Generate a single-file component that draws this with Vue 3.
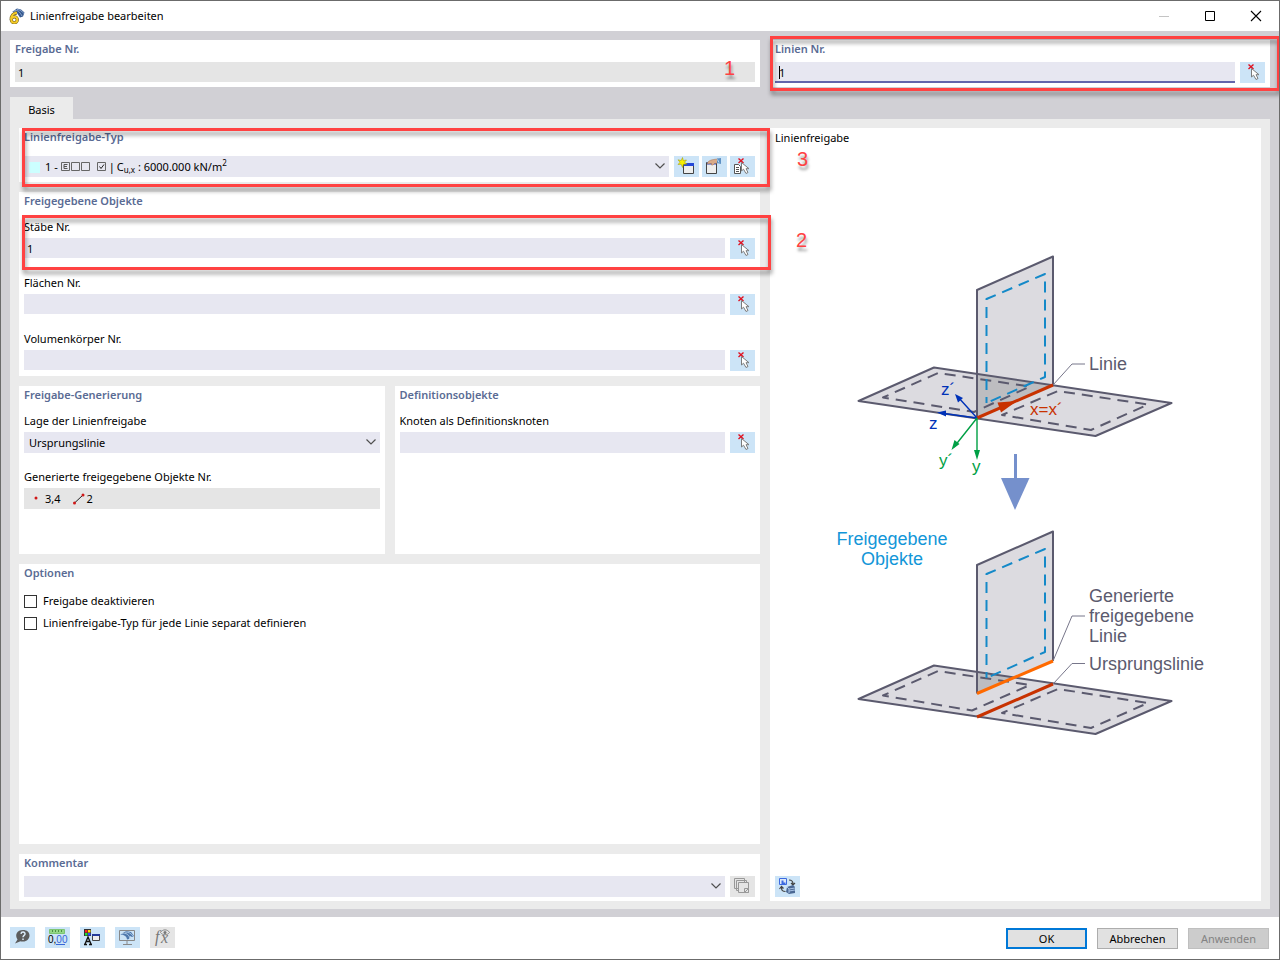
<script setup>
import { ref, h } from 'vue'

const releaseNo = ref('1')
const lineNo = ref('1')
const members = ref('1')
const surfaces = ref('')
const solids = ref('')
const nodes = ref('')
const deactivate = ref(false)
const separate = ref(false)

const PickIcon = (props) =>
  h('svg', { viewBox: '0 0 25 21', width: 25, height: 21, 'aria-hidden': 'true' }, [
    props.list
      ? h('path', { d: 'M4.5 8.5h4l2 2v7h-6zM6 11.5h3M6 13.5h3M6 15.5h3', fill: '#fff', stroke: '#555' })
      : null,
    h('path', { d: 'M8.5 2.5l5 4.5M13.5 2.5l-5 4.5', stroke: '#e01020', 'stroke-width': 1.4, fill: 'none' }),
    h('path', {
      d: 'M11.5 6.5v8.5l2-1.8 2.5 4.3 2-1-2-3.8h3z',
      fill: '#fff',
      stroke: '#7c7c7c',
      'stroke-linejoin': 'round',
    }),
  ])
PickIcon.props = ['list']

const Chevron = () =>
  h('svg', { class: 'chevron', viewBox: '0 0 10 6', width: 10, height: 6, 'aria-hidden': 'true' }, [
    h('path', { d: 'M0.5 0.5L5 5l4.5-4.5', fill: 'none', stroke: '#505050', 'stroke-width': 1.2 }),
  ])
</script>

<template>
  <div class="window">
    <header class="titlebar">
      <svg class="logo" viewBox="0 0 16 16" width="16" height="16" aria-hidden="true">
        <path d="M3 4l5-3.500 4 1 3.500 3-1.500 4-3 1-4-6z" fill="#35598f" />
        <path d="M5 3c3-2 6 1 8 5M8 1.500c3 0 5 2 7 4" fill="none" stroke="#8ba6d0" />
        <path d="M8 4.800C4 5 2 8 2.300 11.500" fill="none" stroke="#6a5a20" stroke-width="3.200" />
        <circle cx="5.300" cy="11.800" r="3" fill="none" stroke="#6a5a20" stroke-width="3.200" />
        <path d="M8 4.800C4 5 2 8 2.300 11.500" fill="none" stroke="#f5cb27" stroke-width="2" />
        <circle cx="5.300" cy="11.800" r="3" fill="none" stroke="#f5cb27" stroke-width="2" />
      </svg>
      <h1>Linienfreigabe bearbeiten</h1>
      <div class="controls">
        <button type="button" aria-label="Minimieren"><svg viewBox="0 0 12 12" width="12" height="12"><path d="M1 6.500h10" stroke="#c4c4c4" /></svg></button>
        <button type="button" aria-label="Maximieren"><svg viewBox="0 0 12 12" width="12" height="12"><path d="M1.500 1.500h9v9h-9z" fill="none" stroke="#000" /></svg></button>
        <button type="button" aria-label="Schließen"><svg viewBox="0 0 12 12" width="12" height="12"><path d="M1 1l10 10M11 1L1 11" stroke="#000" stroke-width="1.100" /></svg></button>
      </div>
    </header>

    <main class="body">
      <div class="top">
        <section class="panel compact">
          <h2><label for="release-no">Freigabe Nr.</label></h2>
          <input id="release-no" v-model="releaseNo" class="field readonly" readonly />
          <span class="mark mark-one">1</span>
        </section>
        <section class="panel compact">
          <h2><label for="line-no">Linien Nr.</label></h2>
          <div class="row">
            <div class="wrap">
              <input id="line-no" v-model="lineNo" class="field active" />
              <span class="caret"></span>
            </div>
            <button class="tool" type="button" aria-label="Linien wählen"><PickIcon /></button>
          </div>
          <div class="frame frame-line"></div>
        </section>
      </div>

      <nav class="tabs"><button type="button" class="tab">Basis</button></nav>

      <div class="page">
        <div class="left">
          <section class="panel">
            <h2><label for="type">Linienfreigabe-Typ</label></h2>
            <div class="row">
              <div class="wrap type-wrap">
                <select id="type" class="field rich"><option>1 - Cu,x : 6000.000 kN/m²</option></select>
                <div class="type-text" aria-hidden="true">
                  <i class="swatch"></i>
                  <span>1 -</span>
                  <svg viewBox="0 0 46 10" width="46" height="10">
                    <path d="M.5.5h8v8h-8zM10.500.5h8v8h-8zM20.500.5h8v8h-8zM36.500.5h8v8h-8z" fill="none" stroke="#666" />
                    <path d="M6.500 2.500h-3.500v4h3.500M3 4.500h3" fill="none" stroke="#555" />
                    <path d="M38.500 4.500l1.500 2 3-4" fill="none" stroke="#222" />
                  </svg>
                  <span>|</span>
                  <span>C<sub>u,x</sub> : 6000.000 kN/m<sup>2</sup></span>
                </div>
                <Chevron />
              </div>
              <div class="tools">
                <button class="tool" type="button" aria-label="Neuer Typ">
                  <svg viewBox="0 0 25 21" width="25" height="21">
                    <path d="M9.500 7.500h10v10h-10z" fill="#eee" stroke="#444" />
                    <path d="M10 7h10v3H10z" fill="#2549d8" />
                    <path d="M8.500 1.500l.8 3L12.500 4l-2 2.300L13 8l-3.500.2-1 3.300L7.200 8.300 4 8.500 6 6.200 4 3.800l3.200.7z" fill="#f8f000" stroke="#9a9300" stroke-width=".5" />
                  </svg>
                </button>
                <button class="tool" type="button" aria-label="Typ bearbeiten">
                  <svg viewBox="0 0 25 21" width="25" height="21">
                    <path d="M4.500 6.500h10v11h-10z" fill="#eee" stroke="#444" />
                    <path d="M5 6h9v2.500H5z" fill="#2549d8" />
                    <path d="M5.500 8c-.5-2.500 3-4 6-4.500l4-.5v4l-3 .5-1.500 1.500h-1.500v-1.500z" fill="#d9aa88" stroke="#a77c60" stroke-width=".6" />
                    <path d="M15 2.500l4-.5v6l-4-1z" fill="#5f91c4" /><path d="M15.500 3.500l1.500 3" stroke="#b9d7ef" />
                  </svg>
                </button>
                <button class="tool" type="button" aria-label="Typ wählen"><PickIcon :list="true" /></button>
              </div>
            </div>
            <div class="frame frame-type"></div>
            <span class="mark mark-three">3</span>
          </section>

          <section class="panel">
            <h2>Freigegebene Objekte</h2>
            <div class="groups">
              <div class="group">
                <label for="members">Stäbe Nr.</label>
                <div class="row">
                  <input id="members" v-model="members" class="field" />
                  <button class="tool" type="button" aria-label="Stäbe wählen"><PickIcon /></button>
                </div>
                <div class="frame frame-members"></div>
                <span class="mark mark-two">2</span>
              </div>
              <div class="group">
                <label for="surfaces">Flächen Nr.</label>
                <div class="row">
                  <input id="surfaces" v-model="surfaces" class="field" />
                  <button class="tool" type="button" aria-label="Flächen wählen"><PickIcon /></button>
                </div>
              </div>
              <div class="group">
                <label for="solids">Volumenkörper Nr.</label>
                <div class="row">
                  <input id="solids" v-model="solids" class="field" />
                  <button class="tool" type="button" aria-label="Volumenkörper wählen"><PickIcon /></button>
                </div>
              </div>
            </div>
          </section>

          <div class="pair">
            <section class="panel">
              <h2>Freigabe-Generierung</h2>
              <div class="groups">
                <div class="group">
                  <label for="location">Lage der Linienfreigabe</label>
                  <div class="wrap">
                    <select id="location" class="field tall"><option>Ursprungslinie</option></select>
                    <Chevron />
                  </div>
                </div>
                <div class="group">
                  <span class="caption">Generierte freigegebene Objekte Nr.</span>
                  <div class="generated">
                    <svg viewBox="0 0 12 12" width="12" height="12"><circle cx="5" cy="5" r="1.500" fill="#d01818" /></svg>
                    <span>3,4</span>
                    <svg class="line-icon" viewBox="0 0 12 12" width="12" height="12"><path d="M1.500 10L10 2" stroke="#222" /><circle cx="1.500" cy="10" r="1.500" fill="#d01818" /><circle cx="10" cy="2" r="1.500" fill="#d01818" /></svg>
                    <span>2</span>
                  </div>
                </div>
              </div>
            </section>
            <section class="panel">
              <h2>Definitionsobjekte</h2>
              <div class="groups">
                <div class="group">
                  <label for="nodes">Knoten als Definitionsknoten</label>
                  <div class="row">
                    <input id="nodes" v-model="nodes" class="field tall" />
                    <button class="tool" type="button" aria-label="Knoten wählen"><PickIcon /></button>
                  </div>
                </div>
              </div>
            </section>
          </div>

          <section class="panel grow">
            <h2>Optionen</h2>
            <div class="options">
              <label><input v-model="deactivate" type="checkbox" />Freigabe deaktivieren</label>
              <label><input v-model="separate" type="checkbox" />Linienfreigabe-Typ für jede Linie separat definieren</label>
            </div>
          </section>

          <section class="panel compact">
            <h2><label for="comment">Kommentar</label></h2>
            <div class="row">
              <div class="wrap">
                <select id="comment" class="field tall"><option></option></select>
                <Chevron />
              </div>
              <button class="tool off" type="button" aria-label="Kommentar übernehmen">
                <svg viewBox="0 0 25 21" width="25" height="21" fill="#e5e5e5" stroke="#989898">
                  <path d="M4.500 2.500h10v10h-10zM6.500 4.500h10v10h-10z" /><path d="M8.500 6.500h10v10h-10z" /><path d="M14.500 12.500h4v4h-4zM15 16l3-3" />
                </svg>
              </button>
            </div>
          </section>
        </div>

        <section class="panel picture">
          <p>Linienfreigabe</p>
          <svg class="diagram" viewBox="770 148 491 724" role="img" aria-label="Linienfreigabe">
            <g stroke-linejoin="round">
              <path class="plate" d="M858.500 401L934 367.500 1171.500 403 1095.500 436z" />
              <path class="plate" d="M977 290l76-33.500V385L977 418z" />
              <path d="M977 374l76 11-76 33z" fill="#bdbdc0" />
              <path class="edge" d="M858.500 401L934 367.500 1171.500 403 1095.500 436z" />
              <path class="edge" d="M1053 385V256.500L977 290v128" />
              <path class="dash" d="M883 397.500l55-24.500 92 13.500-56 25.500z" />
              <path class="dash" d="M1002 415l56-24 90 13.500-57 25.500z" />
              <path class="dash blue" d="M986.500 403V299l58.500-25v103z" />
              <path class="leader" d="M1053 385l19-21h13" />
              <path d="M977 418l76-33" stroke="#c83200" stroke-width="3" />
              <path d="M1017 401l-19.500 1.500 3.500 10z" fill="#c83200" />
              <g fill="#0032b8" stroke="#0032b8"><path d="M977 418l-19-21M977 418l-37-5" stroke-width="1.400" /><path d="M955 394l8 4-5 4.500zM937 412.500l9-2v6z" stroke="none" /></g>
              <g fill="#00a045" stroke="#00a045"><path d="M977 418v38M977 418l-23 29" stroke-width="1.400" /><path d="M977 460l-3-10h6zM951.500 450l3-10 5 4z" stroke="none" /></g>
              <g class="axis"><text x="941" y="395" fill="#0032b8">z´</text><text x="929" y="429" fill="#0032b8">z</text><text x="939" y="466" fill="#00a045">y´</text><text x="972" y="472" fill="#00a045">y</text><text x="1030" y="415" fill="#c83200">x=x´</text></g>
              <text x="1089" y="370">Linie</text>
              <path d="M1015.500 454v25" stroke="#7590cc" stroke-width="3" /><path d="M1001 478h28.500l-14.500 32z" fill="#7590cc" />

              <path class="plate" d="M858.500 699L934 665.500 1171.500 701 1095.500 734z" />
              <path class="plate" d="M977 565l76-33.500V661l-76 32.500z" />
              <path d="M977 672l37 5.500-37 16z" fill="#bdbdc0" />
              <path class="edge" d="M858.500 699L934 665.500 1171.500 701 1095.500 734z" />
              <path class="edge" d="M1053 661V531.500L977 565v128.500" />
              <path class="dash" d="M883 695.500l55-24.500 92 14-58 25.500z" />
              <path class="dash" d="M1002 713l56-24 90 14-57 25z" />
              <path class="dash blue" d="M986.500 678V574l58.500-25v103z" />
              <path class="leader" d="M1053 661l19-45h13M1053 684l19-20.500h13" />
              <path d="M977 717l76-33" stroke="#c83200" stroke-width="3" />
              <path d="M977 693.500l76-32.500" stroke="#ff6a00" stroke-width="3" />
              <text x="1089" y="602">Generierte</text><text x="1089" y="622">freigegebene</text><text x="1089" y="642">Linie</text>
              <text x="1089" y="670">Ursprungslinie</text>
              <g text-anchor="middle" class="sky"><text x="892" y="545">Freigegebene</text><text x="892" y="565">Objekte</text></g>
            </g>
          </svg>
          <button class="tool" type="button" aria-label="Ansicht wechseln">
            <svg viewBox="0 0 25 21" width="25" height="21" fill="none">
              <path d="M4.500 2.500h7v6h-7z" fill="#dce8fa" stroke="#3c6ae0" /><path d="M6.500 4.500h2v2h2v2h-4z" fill="#3c6ae0" />
              <path d="M14 4c3 0 4 1.500 4 4M16 7l2 2 2-2M10.500 15.500c-3 0-4-1-4-4M4.500 13l2-2.500 2 2" stroke="#444" stroke-width="1.200" />
              <path d="M12 11l6-2 2 2v6l-6 1-3-2z" fill="#4b6894" /><path d="M12 11l2 2 6-1M14 13v4M14 15l6-1" stroke="#a9c3e6" />
            </svg>
          </button>
        </section>
      </div>
    </main>

    <footer class="footer">
      <div class="foot-tools">
        <button class="tool" type="button" aria-label="Hilfe">
          <svg viewBox="0 0 25 21" width="25" height="21"><path d="M13 3c4 0 6.500 2.200 6.500 5.500S17 14.500 13 14.500c-1 0-2 0-2.500-.3L5 16.500l2.500-4C4.500 8 7 3 13 3z" fill="#5c5c5c" /><path d="M11 6.800c.3-2.400 4.200-2.200 4 .2-.1 1.400-2 1.500-2 3.200M13 11.500V13" fill="none" stroke="#dcecf9" stroke-width="1.500" /></svg>
        </button>
        <button class="tool" type="button" aria-label="Einheiten">
          <svg viewBox="0 0 25 21" width="25" height="21"><path d="M4.500 2.500h15v4h-15z" fill="#94d788" stroke="#7cc573" /><path d="M7.500 3v2M10.500 3v2M13.500 3v2M16.500 3v2" stroke="#4c9145" /><text class="unit" x="3" y="16">0,<tspan fill="#3465d8">00</tspan></text><path d="M11 17.500h9" stroke="#3465d8" /></svg>
        </button>
        <button class="tool" type="button" aria-label="Anzeige">
          <svg viewBox="0 0 25 21" width="25" height="21"><path d="M4 2h7v7H4z" fill="#333" /><path d="M5 3h2.500v2.500H5z" fill="#f22" /><path d="M8 3h2.500v2.500H8z" fill="#fd0" /><path d="M5 6h2.500v2.500H5z" fill="#2d3" /><path d="M8 6h2.500v2.500H8z" fill="#34f" /><path d="M5 17l3-7 3 7M6.500 14.500h3M4 17.500h3M9 17.500h3" fill="none" stroke="#111" stroke-width="1.300" /><path d="M12.500 7.500h7v6h-7z" fill="#eee" stroke="#444" /><path d="M12 7h8v2h-8z" fill="#243b9a" /></svg>
        </button>
        <button class="tool" type="button" aria-label="Ansicht">
          <svg viewBox="0 0 25 21" width="25" height="21"><path d="M4.500 3.500h15v10h-15zM12 14v3M8 17.500h9" fill="none" stroke="#888" /><path d="M5 8l6-4 5 1 3 4-2 1-2-1-1 3-2 .5C12 10 9 7 5 8z" fill="#4f79ad" /><path d="M7 6.500c4-1 7 1 8 5M10 5c3 0 6 1 8 4" fill="none" stroke="#a8c5e4" /></svg>
        </button>
        <button class="tool off" type="button" aria-label="Formel">
          <svg viewBox="0 0 25 21" width="25" height="21"><text class="formula" x="5" y="15">f</text><text class="formula" x="11" y="16">x</text><path d="M10.500 5.500c2-3.500 7-3.500 9 0-2 3-7 3-9 0z" fill="#e5e5e5" stroke="#888" /><circle cx="15" cy="5.500" r="1.500" fill="#777" /></svg>
        </button>
      </div>
      <div class="actions">
        <button type="button" class="primary">OK</button>
        <button type="button">Abbrechen</button>
        <button type="button" disabled>Anwenden</button>
      </div>
    </footer>
  </div>
</template>

<style>
body { margin: 0; }
</style>

<style scoped>
* { box-sizing: border-box; }
.window { min-height: 100vh; display: flex; flex-direction: column; border: 1px solid #6b6b6b; background: #fff; color: #000; overflow: hidden; font: 11px/18px "Noto Sans", "Open Sans", sans-serif; }
button, input, select { font: inherit; color: inherit; margin: 0; }
svg { display: block; flex: none; }
h1, h2, p { margin: 0; font-weight: 400; }
.titlebar { height: 30px; display: flex; align-items: center; padding-left: 8px; gap: 5px; }
h1 { font-size: 11px; flex: 1; }
.controls { display: flex; }
.controls button { width: 46px; height: 30px; padding: 0; border: 0; background: none; display: grid; place-items: center; }
.body { flex: 1; display: flex; flex-direction: column; padding: 9px 9px 8px; background: #d1d0d5; }
.top { display: grid; grid-template-columns: 3fr 2fr; gap: 10px; }
.panel { position: relative; background: #fff; padding: 0 5px 5px; min-width: 0; }
h2 { font-size: 11px; line-height: 18px; font-weight: 600; color: #5a6b94; margin-bottom: 8px; }
.panel:has(> .frame-type) h2 { margin-bottom: 10px; }
.compact { padding-bottom: 4px; }
.compact h2 { margin-bottom: 4px; }
.row { display: flex; gap: 5px; align-items: flex-start; }
.wrap { position: relative; flex: 1; min-width: 0; }
.field { display: block; width: 100%; height: 20px; min-width: 0; flex: 1; border: 0; border-radius: 0; padding: 1px 3px 0; background: #e7e7f1; outline: 0; appearance: none; }
.readonly { background: #e5e5e5; }
.active { height: 21px; border-bottom: 2px solid #6265ab; padding-left: 4px; }
.compact .row { height: 21px; }
.caret { position: absolute; left: 4px; top: 4px; width: 1px; height: 13px; background: #000; }
.tall, .rich { height: 21px; }
select.field { padding: 1px 20px 0 5px; }
.rich { color: transparent; }
.chevron { position: absolute; right: 4px; top: 7px; pointer-events: none; }
.type-text { position: absolute; inset: 0 20px 0 5px; display: flex; align-items: center; gap: 3px; padding-top: 1px; white-space: nowrap; pointer-events: none; }
.type-text svg + span { margin: 0 -1px; }
.swatch { width: 11px; height: 11px; background: #ccffff; margin-right: 2px; }
sub, sup { font-size: 8px; line-height: 0; }
sub { vertical-align: -2px; }
.tools { display: flex; gap: 3px; }
.tool { flex: none; width: 25px; height: 21px; padding: 0; border: 0; background: #cce4f7; }
.off { background: #e5e5e5; }
.tabs { display: flex; margin-top: 10px; }
.tab { width: 63px; height: 22px; padding: 4px 0 0; border: 0; background: #ebebeb; }
.page { flex: 1; display: grid; grid-template-columns: 741fr 491fr; gap: 10px; padding: 9px 9px 8px; background: #ebebeb; }
.left { display: flex; flex-direction: column; gap: 10px; min-width: 0; }
.groups { display: flex; flex-direction: column; gap: 15px; }
.group { position: relative; display: flex; flex-direction: column; gap: 2px; }
.group > .wrap { flex: none; }
.group > .row { height: 21px; }
.pair { display: grid; grid-template-columns: 1fr 1fr; gap: 10px; min-height: 168px; }
.generated { display: flex; align-items: center; height: 21px; padding: 1px 7px 0; background: #e5e5e5; }
.generated span { margin-left: 2px; }
.line-icon { margin-left: 12px; }
.grow { flex: 1; }
.options label { display: flex; align-items: center; gap: 6px; height: 22px; }
.options input { appearance: none; width: 13px; height: 13px; border: 1px solid #333; background: #fff; }
.options input:checked { background: #5a6b94; }
.picture { display: flex; flex-direction: column; padding-bottom: 4px; }
.picture p { padding-top: 1px; }
.diagram { flex: 1 1 0; min-height: 400px; width: calc(100% + 10px); margin: 1px -5px 4px; fill: none; font: 18px "Liberation Sans", Arial, sans-serif; }
.diagram text { fill: #5b5a6e; }
.diagram .axis { font-size: 17px; }
.diagram .axis text { fill: revert-layer; }
.diagram .sky text { fill: #1296d8; }
.plate { fill: #dcdbe0; }
.edge { fill: none; stroke: #5b5a6e; stroke-width: 2; }
.dash { fill: none; stroke: #5b5a6e; stroke-width: 2; stroke-dasharray: 11 7; stroke-dashoffset: 5; }
.blue { stroke: #1489c8; }
.leader { fill: none; stroke: #77768a; stroke-width: 1; }
.frame { position: absolute; z-index: 3; border: 3px solid #ff4242; pointer-events: none; filter: drop-shadow(1px 4px 2px rgba(0, 0, 0, 0.4)); }
.frame-line { inset: -4px -10px -4px 0; }
.frame-type { inset: 0 -10px -5px 3px; }
.frame-members { inset: -3px -16px -11px -2px; }
.mark { position: absolute; z-index: 3; color: #ff4242; font: 20px/24px "Liberation Sans", Arial, sans-serif; text-shadow: 1px 4px 3px rgba(0, 0, 0, 0.4); }
.mark-one { right: 25px; top: 16px; }
.mark-three { left: calc(100% + 37px); top: 19px; }
.mark-two { left: calc(100% + 41px); top: 10px; }
.footer { display: flex; align-items: flex-start; justify-content: space-between; height: 42px; padding: 10px 10px 0 9px; }
.foot-tools, .actions { display: flex; gap: 10px; }
.actions { padding-top: 1px; }
.actions button { width: 81px; height: 21px; padding: 0; border: 1px solid #adadad; background: #e1e1e1; line-height: 18px; }
.actions .primary { border: 2px solid #0078d7; line-height: 16px; }
.actions button:disabled { background: #ccc; border-color: #bfbfbf; color: #838383; }
.unit { font: 10px "Liberation Sans", sans-serif; }
.formula { font: italic 16px "Liberation Serif", serif; fill: #777; }
</style>
